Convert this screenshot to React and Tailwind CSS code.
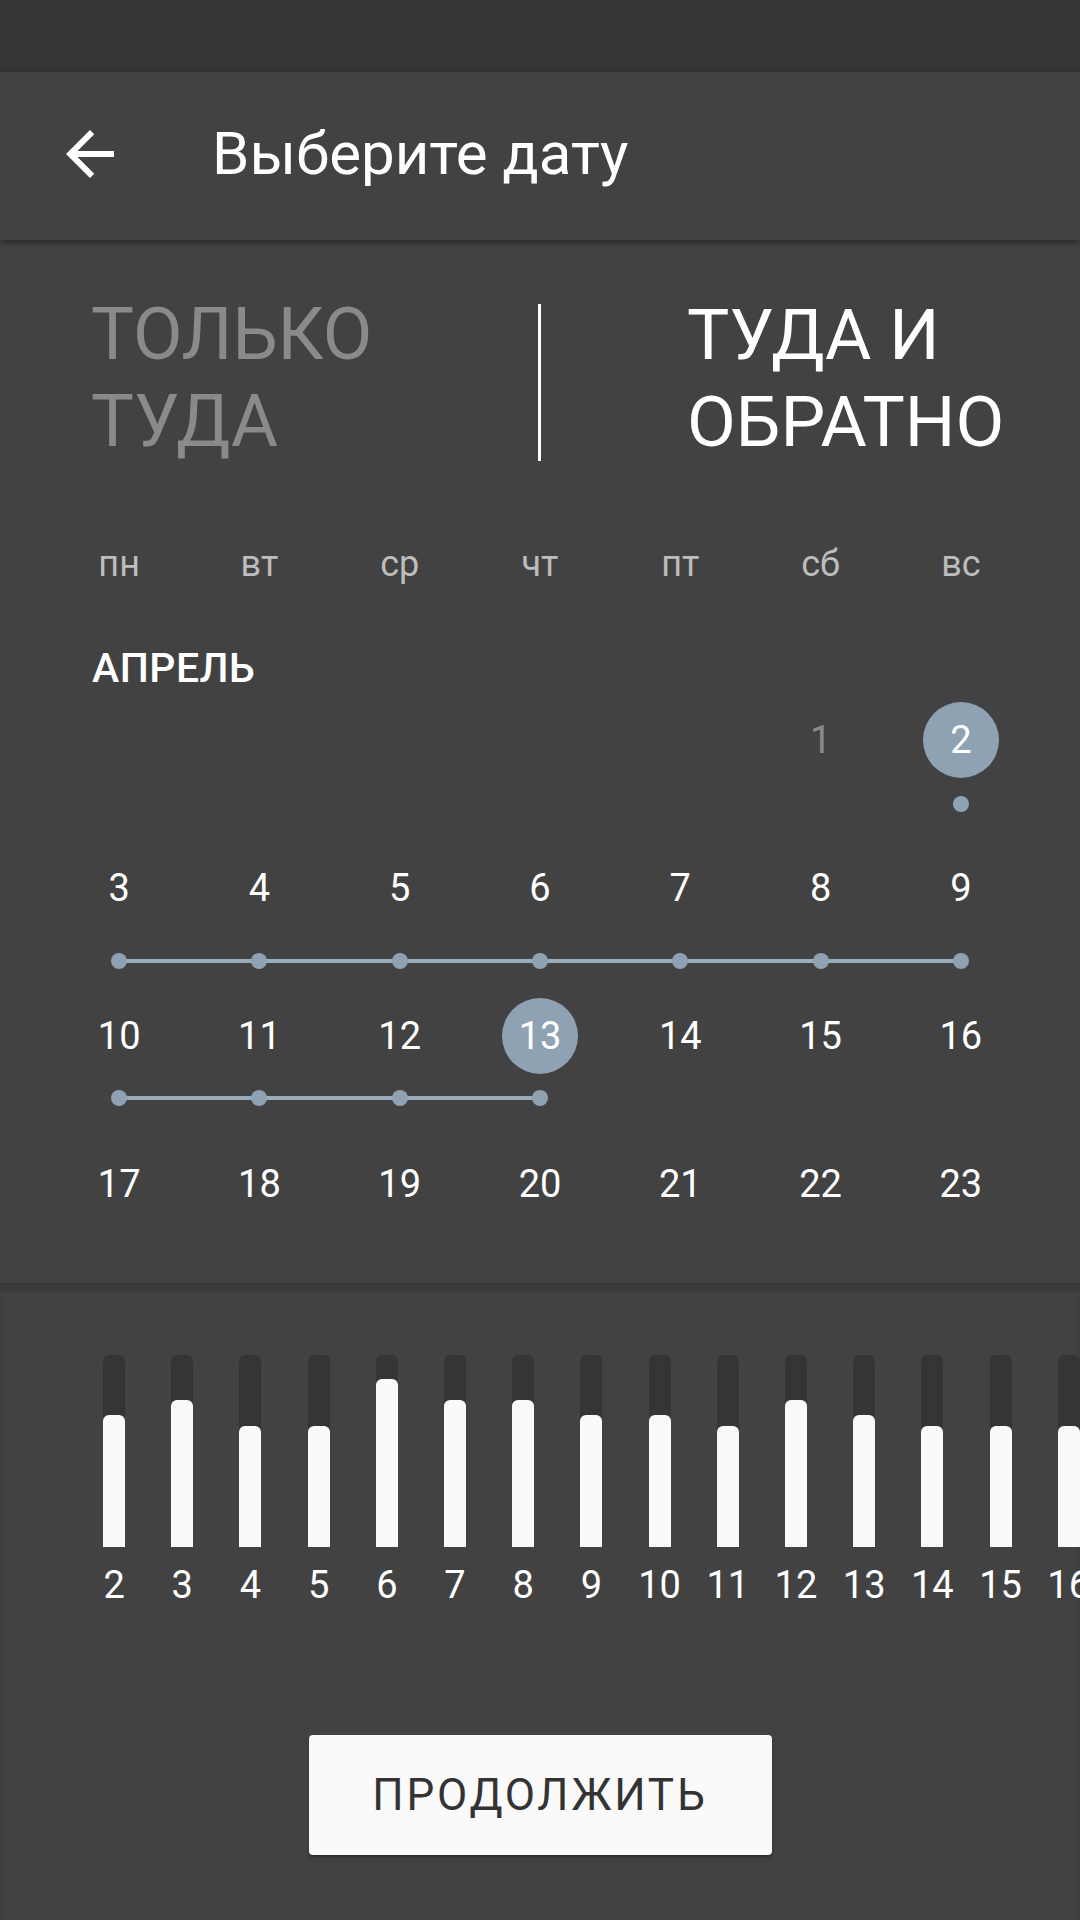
const weekdays = ['пн', 'вт', 'ср', 'чт', 'пт', 'сб', 'вс'];

// each week: cells (null = empty), selected days, connector [fromCol, toCol] and offset under digits
const weeks = [
  { days: [null, null, null, null, null, 1, 2], muted: [1], selected: [2], line: [6, 6], gap: 18 },
  { days: [3, 4, 5, 6, 7, 8, 9], muted: [], selected: [], line: [0, 6], gap: 27 },
  { days: [10, 11, 12, 13, 14, 15, 16], muted: [], selected: [13], line: [0, 3], gap: 16 },
  { days: [17, 18, 19, 20, 21, 22, 23], muted: [], selected: [], line: null, gap: 0 },
];

const bars = [
  { day: 2, h: 132 },
  { day: 3, h: 147 },
  { day: 4, h: 121 },
  { day: 5, h: 121 },
  { day: 6, h: 168 },
  { day: 7, h: 147 },
  { day: 8, h: 147 },
  { day: 9, h: 132 },
  { day: 10, h: 132 },
  { day: 11, h: 121 },
  { day: 12, h: 147 },
  { day: 13, h: 132 },
  { day: 14, h: 121 },
  { day: 15, h: 121 },
  { day: 16, h: 121 },
];

const COL = 982 / 7;

const Connector = ({ line, gap }) => {
  if (!line) return null;
  const [from, to] = line;
  const left = from * COL + COL / 2;
  const width = (to - from) * COL;
  return (
    <div className="relative h-[16px]" style={{ marginTop: gap }}>
      {width > 0 && (
        <div
          className="absolute top-[6px] h-[4px] bg-[#9aabb9]"
          style={{ left, width }}
        />
      )}
      {Array.from({ length: to - from + 1 }).map((_, i) => (
        <div
          key={i}
          className="absolute top-0 w-[16px] h-[16px] -ml-[8px] rounded-full bg-[#8ea2b4]"
          style={{ left: (from + i) * COL + COL / 2 }}
        />
      ))}
    </div>
  );
};

const Week = ({ week, last }) => (
  <div className={last ? 'h-[137px]' : 'h-[148px]'}>
    <div className="grid grid-cols-7 h-[76px]">
      {week.days.map((d, i) => {
        const sel = week.selected.includes(d);
        const muted = week.muted.includes(d);
        return (
          <div key={i} className="flex items-center justify-center">
            {d !== null && (
              <div
                className={
                  'w-[76px] h-[76px] rounded-full flex items-center justify-center text-[38px] ' +
                  (sel ? 'bg-[#8ea2b4] text-white' : muted ? 'text-[#8a8a8a]' : 'text-white')
                }
              >
                {d}
              </div>
            )}
          </div>
        );
      })}
    </div>
    <Connector line={week.line} gap={week.gap} />
  </div>
);

export default function App() {
  return (
    <div
      className="w-[1080px] h-[1920px] bg-[#424242] flex flex-col overflow-hidden"
      style={{ fontFamily: 'Roboto, "Noto Sans", sans-serif' }}
    >
      {/* status bar */}
      <div className="h-[72px] bg-[#353535] shrink-0" />

      {/* toolbar */}
      <div className="relative z-10 h-[168px] shrink-0 bg-[#424242] flex items-center pb-[4px] shadow-[0_3px_6px_rgba(0,0,0,0.35)]">
        <div className="w-[72px] h-[72px] ml-[54px] flex items-center justify-center">
          <svg viewBox="0 0 24 24" className="w-[72px] h-[72px]" fill="#ffffff">
            <path d="M20 11H7.83l5.59-5.59L12 4l-8 8 8 8 1.41-1.41L7.83 13H20v-2z" />
          </svg>
        </div>
        <div className="ml-[86px] text-[60px] text-white leading-none">Выберите дату</div>
      </div>

      {/* calendar */}
      <div className="h-[1043px] shrink-0 pt-[51px]">
        <div className="flex items-center">
          <div className="w-[538px] pl-[91px] text-[72px] leading-[87px] text-[#8a8a8a]">
            <div>ТОЛЬКО</div>
            <div>ТУДА</div>
          </div>
          <div className="w-[3px] h-[157px] bg-white mt-[9px]" />
          <div className="pl-[146px] text-[71px] leading-[87px] text-white">
            <div>ТУДА И</div>
            <div>ОБРАТНО</div>
          </div>
        </div>

        <div className="mt-[77px] px-[49px] grid grid-cols-7 text-[36px] leading-[44px] text-[#bdbdbd]">
          {weekdays.map((w) => (
            <div key={w} className="text-center">{w}</div>
          ))}
        </div>

        <div className="mt-[58px] pl-[92px] text-[41px] leading-[48px] font-medium text-white tracking-[0.5px]">АПРЕЛЬ</div>

        <div className="mt-[10px] px-[49px]">
          {weeks.map((w, i) => (
            <Week key={i} week={w} last={i === weeks.length - 1} />
          ))}
        </div>
      </div>

      {/* price bars */}
      <div className="flex-1 relative border-t-[4px] border-[#3a3a3a] shadow-[inset_0_4px_4px_rgba(0,0,0,0.15)]">
        <div className="flex pl-[80px] pt-[68px]">
          {bars.map((b) => (
            <div key={b.day} className="w-[68.2px] shrink-0 flex flex-col items-center">
              <div className="w-[22px] h-[192px] rounded-t-[6px] bg-[#353535] flex flex-col justify-end">
                <div className="w-[22px] rounded-t-[6px] bg-[#fafafa]" style={{ height: b.h }} />
              </div>
              <div className="mt-[16px] text-[38px] leading-[45px] text-white">{b.day}</div>
            </div>
          ))}
        </div>

        <div className="mt-[127px] flex justify-center">
          <button className="w-[463px] h-[120px] rounded-[4px] bg-[#fafafa] text-[#333333] text-[44px] tracking-[2.8px] shadow-[0_2px_3px_rgba(0,0,0,0.3)]">
            ПРОДОЛЖИТЬ
          </button>
        </div>
      </div>
    </div>
  );
}
